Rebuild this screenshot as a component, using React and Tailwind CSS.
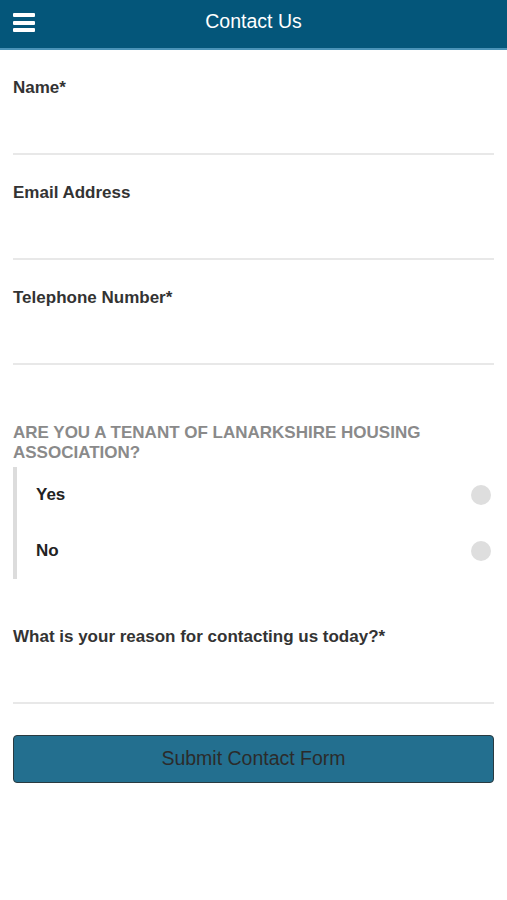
const Field = ({ label }) => (
  <div className="pt-[28px] border-b-2 border-[#e8e8e8]">
    <div className="text-[17px] leading-[20px] font-bold text-[#333]">{label}</div>
    <div className="h-[55px]" />
  </div>
);

const RadioRow = ({ label }) => (
  <div className="h-[56px] flex items-center justify-between pl-[19px] pr-[3px]">
    <span className="text-[17px] font-bold text-[#222]">{label}</span>
    <span className="w-[20px] h-[20px] rounded-full bg-[#dedede]" />
  </div>
);

const App = () => {
  return (
    <div className="min-h-screen bg-white" style={{ fontFamily: '"Liberation Sans", Arial, sans-serif' }}>
      <header className="relative h-[50px] bg-[#04567a] border-b-2 border-[#4a93b8] flex items-center justify-center">
        <button className="absolute left-[13px] top-[13px] w-[22px] h-[19px] flex flex-col justify-between">
          <span className="block h-[4px] w-full bg-white rounded-[1px]" />
          <span className="block h-[4px] w-full bg-white rounded-[1px]" />
          <span className="block h-[4px] w-full bg-white rounded-[1px]" />
        </button>
        <h1 className="text-white text-[19.5px] leading-none -mt-[5px]">Contact Us</h1>
      </header>

      <main className="px-[13px]">
        <Field label="Name*" />
        <Field label="Email Address" />
        <Field label="Telephone Number*" />

        <div className="mt-[58px] text-[17px] leading-[20px] font-bold text-[#8a8a8a] uppercase">
          Are you a tenant of Lanarkshire Housing Association?
        </div>
        <div className="mt-[4px] border-l-4 border-[#dcdcdc]">
          <RadioRow label="Yes" />
          <RadioRow label="No" />
        </div>

        <div className="mt-[48px] border-b-2 border-[#e8e8e8]">
          <div className="text-[17px] leading-[20px] font-bold text-[#333]">What is your reason for contacting us today?*</div>
          <div className="h-[55px]" />
        </div>

        <button className="mt-[31px] w-full h-[48px] bg-[#236f8f] border border-[#2a3a40] rounded-[4px] text-[19.5px] text-[#2b2b2b]">
          Submit Contact Form
        </button>
      </main>
    </div>
  );
};

export default App;
